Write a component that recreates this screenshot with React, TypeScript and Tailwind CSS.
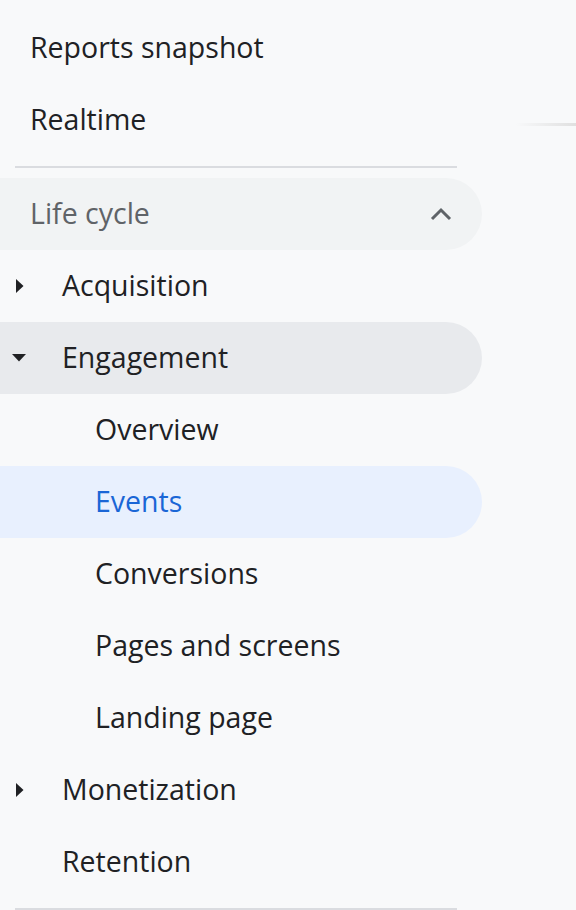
import React from 'react';

const font = { fontFamily: '"Open Sans", Roboto, Arial, sans-serif' };

function Caret({ open }: { open?: boolean }) {
  return open ? (
    <svg width="14" height="8" viewBox="0 0 14 8" className="absolute left-[12px]">
      <path d="M0 0h14L7 7.5z" fill="#202124" />
    </svg>
  ) : (
    <svg width="8" height="14" viewBox="0 0 8 14" className="absolute left-[16px]">
      <path d="M0 0l7.5 7L0 14z" fill="#202124" />
    </svg>
  );
}

function Row({
  label,
  indent,
  caret,
  bg = '',
  color = 'text-[#202124]',
}: {
  label: string;
  indent: string;
  caret?: 'open' | 'closed';
  bg?: string;
  color?: string;
}) {
  return (
    <div className={`relative flex h-[72px] w-[482px] items-center rounded-r-full ${bg}`}>
      {caret && <Caret open={caret === 'open'} />}
      <span className={`${indent} ${color} -mt-[2px] text-[28.5px] leading-none`}>{label}</span>
    </div>
  );
}

export default function App() {
  return (
    <div className="relative h-[910px] w-[576px] overflow-hidden bg-[#f8f9fa]" style={font}>
      <div className="absolute right-0 top-[123px] h-[3px] w-[60px] bg-gradient-to-r from-transparent to-[#e0e0e0]" />
      <div className="flex flex-col pt-[12px]">
        <Row label="Reports snapshot" indent="pl-[30px]" />
        <Row label="Realtime" indent="pl-[30px]" />
        <div className="ml-[15px] mt-[10px] mb-[10px] h-[2px] w-[442px] bg-[#dadce0]" />
        <div className="relative flex h-[72px] w-[482px] items-center justify-between rounded-r-full bg-[#f1f3f4] pl-[30px] pr-[30px]">
          <span className="-mt-[2px] text-[28.5px] leading-none text-[#5f6368]">Life cycle</span>
          <svg width="22" height="14" viewBox="0 0 22 14">
            <path d="M2 12l9-9 9 9" fill="none" stroke="#5f6368" strokeWidth="3" />
          </svg>
        </div>
        <Row label="Acquisition" indent="pl-[62px]" caret="closed" />
        <Row label="Engagement" indent="pl-[62px]" caret="open" bg="bg-[#e8eaed]" />
        <Row label="Overview" indent="pl-[95px]" />
        <Row label="Events" indent="pl-[95px]" bg="bg-[#e8f0fe]" color="text-[#1a66d6]" />
        <Row label="Conversions" indent="pl-[95px]" />
        <Row label="Pages and screens" indent="pl-[95px]" />
        <Row label="Landing page" indent="pl-[95px]" />
        <Row label="Monetization" indent="pl-[62px]" caret="closed" />
        <Row label="Retention" indent="pl-[62px]" />
        <div className="ml-[15px] mt-[10px] h-[2px] w-[442px] bg-[#dadce0]" />
      </div>
    </div>
  );
}
